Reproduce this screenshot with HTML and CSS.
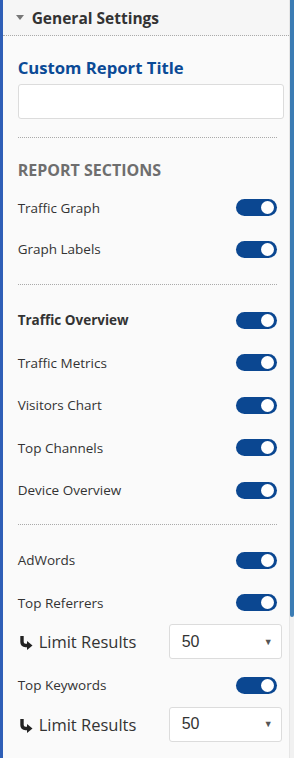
FILE: index.html
```html
<!DOCTYPE html>
<html lang="en">
<head>
    <meta charset="UTF-8">
    <meta name="viewport" content="width=device-width, initial-scale=1.0">
    <title>General Settings</title>
    <link rel="stylesheet" href="styles.css">
</head>
<body>
    <div class="sidebar">
        <div class="edge"></div>
        <div class="panel">
            <div class="panel-head">
                <span class="caret"></span>
                <span class="panel-title">General Settings</span>
            </div>
            <div class="panel-body">
                <label class="field-title" for="reportTitle">Custom Report Title</label>
                <input type="text" id="reportTitle" class="text-input">

                <div class="divider"></div>

                <h2 class="section-title">REPORT SECTIONS</h2>
                <div class="group first">
                    <div class="row">
                        <span>Traffic Graph</span>
                        <span class="toggle"></span>
                    </div>
                    <div class="row">
                        <span>Graph Labels</span>
                        <span class="toggle"></span>
                    </div>
                </div>

                <div class="divider"></div>

                <div class="group">
                    <div class="row">
                        <strong>Traffic Overview</strong>
                        <span class="toggle"></span>
                    </div>
                    <div class="row">
                        <span>Traffic Metrics</span>
                        <span class="toggle"></span>
                    </div>
                    <div class="row">
                        <span>Visitors Chart</span>
                        <span class="toggle"></span>
                    </div>
                    <div class="row">
                        <span>Top Channels</span>
                        <span class="toggle"></span>
                    </div>
                    <div class="row">
                        <span>Device Overview</span>
                        <span class="toggle"></span>
                    </div>
                </div>

                <div class="divider"></div>

                <div class="group">
                    <div class="row">
                        <span>AdWords</span>
                        <span class="toggle"></span>
                    </div>
                    <div class="row">
                        <span>Top Referrers</span>
                        <span class="toggle"></span>
                    </div>
                    <div class="limit-row">
                        <span class="limit-label">
                            <svg class="sub-arrow" width="15" height="14" viewBox="0 0 15 14">
                                <path d="M4 0 V6 Q4 9.5 7.5 9.5 H10" fill="none" stroke="#222" stroke-width="3.4"/>
                                <path d="M9 5 L14.5 9.5 L9 14 Z" fill="#222"/>
                            </svg>
                            Limit Results
                        </span>
                        <span class="select">50<span class="select-arrow">&#9660;</span></span>
                    </div>
                    <div class="row">
                        <span>Top Keywords</span>
                        <span class="toggle"></span>
                    </div>
                    <div class="limit-row">
                        <span class="limit-label">
                            <svg class="sub-arrow" width="15" height="14" viewBox="0 0 15 14">
                                <path d="M4 0 V6 Q4 9.5 7.5 9.5 H10" fill="none" stroke="#222" stroke-width="3.4"/>
                                <path d="M9 5 L14.5 9.5 L9 14 Z" fill="#222"/>
                            </svg>
                            Limit Results
                        </span>
                        <span class="select">50<span class="select-arrow">&#9660;</span></span>
                    </div>
                </div>
            </div>
        </div>
        <div class="scroll">
            <div class="thumb"></div>
        </div>
    </div>
</body>
</html>
```

FILE: styles.css
```css
body {
    margin: 0;
    font-family: "Open Sans", Arial, sans-serif;
    color: #333;
    background: #fafafa;
}
.sidebar {
    display: flex;
    height: 758px;
    overflow: hidden;
}
.edge {
    width: 3px;
    background: #2f5fb7;
}
.panel {
    flex: 1;
    background: #fafafa;
    border-right: 1px solid #e6e6e6;
}
.scroll {
    width: 5px;
    background: #f1f1f1;
}
.thumb {
    height: 617px;
    background: #3b7cb4;
    border-radius: 0 0 2px 2px;
}
.panel-head {
    height: 35px;
    display: flex;
    align-items: center;
    padding-left: 13px;
    border-bottom: 1px dotted #aaa;
    background: #f6f6f6;
}
.caret {
    width: 0;
    height: 0;
    border-left: 4px solid transparent;
    border-right: 4px solid transparent;
    border-top: 5px solid #777;
    margin-right: 8px;
}
.panel-title {
    font-size: 15.5px;
    font-weight: bold;
    color: #333;
}
.panel-body {
    padding: 0 5px 0 15px;
}
.field-title {
    display: block;
    margin-top: 21px;
    font-size: 16.7px;
    font-weight: bold;
    line-height: 22px;
    color: #0b4a96;
}
.text-input {
    display: block;
    box-sizing: border-box;
    width: 266px;
    height: 35px;
    margin-top: 5px;
    border: 1px solid #dcdcdc;
    border-radius: 3px;
    background: #fff;
}
.divider {
    width: 259px;
    border-top: 1px dotted #aaa;
    margin-top: 18px;
}
.section-title {
    margin: 21px 0 0;
    font-size: 16px;
    line-height: 22px;
    font-weight: bold;
    color: #6e6e6e;
}
.group {
    width: 259px;
    padding-top: 14px;
    margin-bottom: -5.5px;
}
.group.first {
    padding-top: 6px;
    margin-bottom: -4px;
}
.group.first .row {
    height: 41.5px;
}
.row {
    height: 42.5px;
    display: flex;
    align-items: center;
    justify-content: space-between;
    font-size: 13.5px;
}
.row strong {
    font-weight: bold;
}
.toggle {
    position: relative;
    width: 41px;
    height: 17px;
    border-radius: 9px;
    background: #0b4791;
}
.toggle::after {
    content: "";
    position: absolute;
    right: 3px;
    top: 2px;
    width: 13px;
    height: 13px;
    border-radius: 50%;
    background: #fff;
}
.limit-row {
    width: 264px;
    height: 35px;
    display: flex;
    align-items: center;
    justify-content: space-between;
    margin-bottom: 5px;
}
.limit-label {
    display: flex;
    align-items: center;
    font-size: 16.5px;
    color: #333;
}
.sub-arrow {
    margin: 3px 6px 0 0;
}
.select {
    box-sizing: border-box;
    width: 113px;
    height: 35px;
    display: flex;
    align-items: center;
    justify-content: space-between;
    padding: 0 8px 0 12px;
    border: 1px solid #dcdcdc;
    border-radius: 3px;
    background: #fff;
    font-family: "Liberation Sans", Arial, sans-serif;
    font-size: 16px;
    color: #333;
}
.select-arrow {
    font-size: 9px;
    color: #555;
}
```
